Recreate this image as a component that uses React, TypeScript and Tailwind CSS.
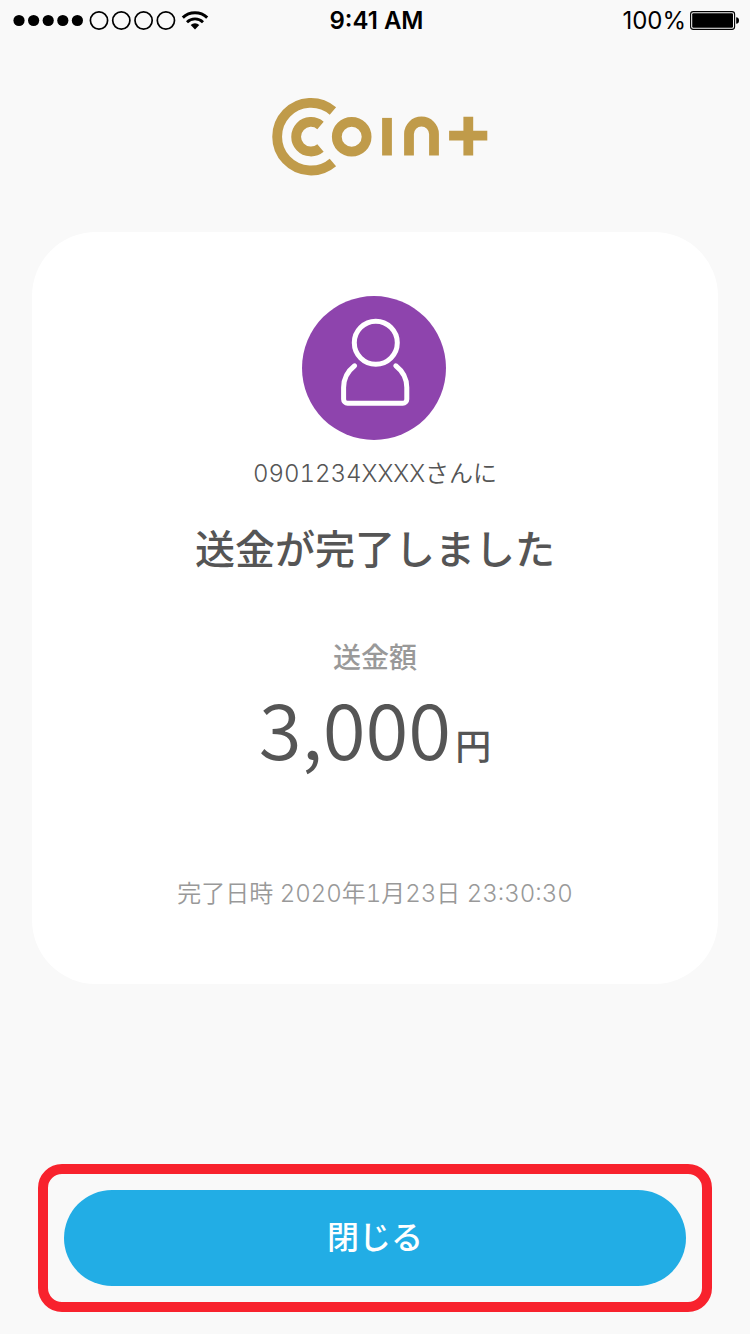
import type { ReactNode } from 'react';

type Transfer = {
  recipient: string;
  amount: number;
  completedAt: string;
};

const transfer: Transfer = {
  recipient: '0901234XXXX',
  amount: 3000,
  completedAt: '2020年1月23日 23:30:30',
};

const SignalIcon = () => (
  <svg width="164" height="20" viewBox="0 0 164 20" aria-hidden="true">
    {[6, 20.6, 35.2, 49.8, 64.4].map((cx) => (
      <circle key={cx} cx={cx} cy="9.5" r="5.6" fill="#000" />
    ))}
    {[86, 108.3, 130.6, 152.9].map((cx) => (
      <circle key={cx} cx={cx} cy="9.5" r="8.6" fill="none" stroke="#000" strokeWidth="1.7" />
    ))}
  </svg>
);

const WifiIcon = () => (
  <svg width="28" height="20" viewBox="0 0 28 20" fill="none" stroke="#000" aria-hidden="true">
    <path d="M1.8 6.6a17.6 17.6 0 0 1 24.4 0" strokeWidth="3" />
    <path d="M6 11.2a11.3 11.3 0 0 1 16 0" strokeWidth="2.8" />
    <path d="M14 18.4l-4.3-4.3a6.2 6.2 0 0 1 8.6 0z" fill="#000" stroke="none" />
  </svg>
);

const BatteryIcon = () => (
  <svg width="50" height="20" viewBox="0 0 50 20" aria-hidden="true">
    <rect x="0.6" y="0.6" width="44" height="17.8" rx="2.6" fill="none" stroke="#000" strokeWidth="1.1" />
    <rect x="2.2" y="2.2" width="40.8" height="14.6" rx="1.2" fill="#000" />
    <path d="M46.2 6.2c1.6 0 2.8 1 2.8 3.3s-1.2 3.3-2.8 3.3z" fill="#000" />
  </svg>
);

const StatusBar = () => (
  <div className="grid h-[42px] grid-cols-3 items-center pr-2.5 pl-[13px] text-2xl text-black">
    <div className="flex items-center gap-1">
      <SignalIcon />
      <WifiIcon />
    </div>
    <span className="text-center font-semibold">9:41 AM</span>
    <div className="flex items-center justify-end gap-1">
      <span>100%</span>
      <BatteryIcon />
    </div>
  </div>
);

const Logo = () => (
  <svg
    width="216"
    height="79"
    viewBox="0 0 216 79"
    fill="none"
    stroke="#c09b4a"
    strokeWidth="9.8"
    role="img"
    aria-label="Coin+"
  >
    <path d="M60.9 14A33.8 33.8 0 1 0 60.9 65.4" />
    <path d="M48.5 28.4A14.8 14.8 0 1 0 48.5 51" />
    <circle cx="79.7" cy="39.7" r="14.9" />
    <path d="M115 20.9v37.6" />
    <path d="M137 58.6V37a12.5 12.5 0 0 1 25 0v21.6" />
    <path d="M177.1 38.7h38.2M196.3 19.7v38.9" />
  </svg>
);

const Avatar = () => (
  <svg width="146" height="144" viewBox="0 0 146 144" fill="none" aria-hidden="true">
    <circle cx="72" cy="72" r="72" fill="#8e44ad" />
    <g stroke="#fff" strokeWidth="5" strokeLinecap="round">
      <circle cx="73.8" cy="46.7" r="21.5" />
      <path d="M52.6 69.8C46 75 41.6 82.4 41.6 91.6v11.6a4 4 0 0 0 4 4h55.2a4 4 0 0 0 4-4V91.6c0-9.2-4.4-16.6-11-21.8" />
    </g>
  </svg>
);

const Highlight = ({ children }: { children: ReactNode }) => (
  <div className="rounded-3xl border-[10px] border-[#f8222d] p-4">{children}</div>
);

const App = () => {
  return (
    <div className="flex min-h-screen flex-col bg-[#f9f9f9] font-['Inter','Noto_Sans_CJK_JP',sans-serif] text-[#555]">
      <StatusBar />

      <header className="flex justify-center pt-[55px] pl-2.5">
        <Logo />
      </header>

      {/* Result card */}
      <main className="mx-8 mt-14 flex flex-col items-center rounded-[64px] bg-white pt-16 pb-[74px]">
        <Avatar />
        <p className="mt-[18px] text-2xl font-[350] tabular-nums">{transfer.recipient}さんに</p>
        <h1 className="mt-[34px] text-[40px] leading-[52px] font-medium">送金が完了しました</h1>

        <dl className="mt-16 flex flex-col items-center">
          <dt className="text-[28px] leading-9 font-medium text-[#999]">送金額</dt>
          <dd className="mt-2 flex items-baseline gap-1 font-['Noto_Sans_CJK_JP',sans-serif]">
            <span className="text-[78px] leading-[84px] font-[350]">
              {transfer.amount.toLocaleString('en-US')}
            </span>
            <span className="text-4xl font-medium">円</span>
          </dd>
        </dl>

        <p className="mt-[110px] text-2xl font-[350] text-[#999] tabular-nums">
          完了日時 {transfer.completedAt}
        </p>
      </main>

      <footer className="mx-[38px] mt-auto mb-[22px]">
        <Highlight>
          <button
            type="button"
            className="h-24 w-full rounded-full bg-[#22ade5] text-[32px] font-medium text-white"
          >
            閉じる
          </button>
        </Highlight>
      </footer>
    </div>
  );
};

export default App;
